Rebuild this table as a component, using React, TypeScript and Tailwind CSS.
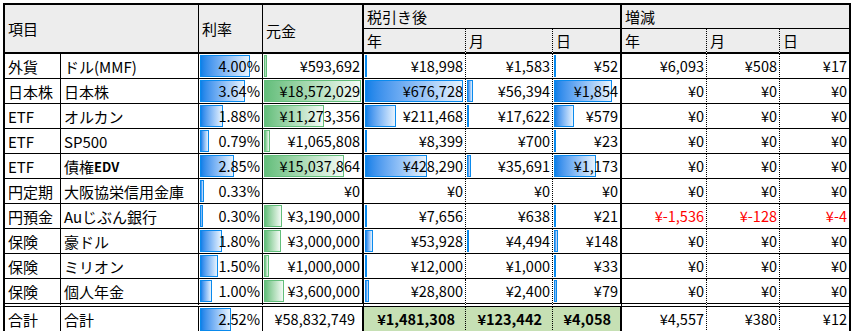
import clsx from "clsx";
import type { ReactNode } from "react";

type Row = {
  cat: string;
  name: ReactNode;
  rate: string;
  rateBar: number;
  principal: string;
  principalBar: number;
  year: string;
  yearBar: number;
  month: string;
  monthBar: number;
  day: string;
  dayBar: number;
  diff: [string, string, string];
  negative?: boolean;
};

const rows: Row[] = [
  { cat: "外貨", name: "ドル(MMF)", rate: "4.00%", rateBar: 50, principal: "¥593,692", principalBar: 3, year: "¥18,998", yearBar: 2, month: "¥1,583", monthBar: 0, day: "¥52", dayBar: 2, diff: ["¥6,093", "¥508", "¥17"] },
  { cat: "日本株", name: "日本株", rate: "3.64%", rateBar: 45, principal: "¥18,572,029", principalBar: 97, year: "¥676,728", yearBar: 98, month: "¥56,394", monthBar: 6, day: "¥1,854", dayBar: 58, diff: ["¥0", "¥0", "¥0"] },
  { cat: "ETF", name: "オルカン", rate: "1.88%", rateBar: 23, principal: "¥11,273,356", principalBar: 60, year: "¥211,468", yearBar: 31, month: "¥17,622", monthBar: 2, day: "¥579", dayBar: 20, diff: ["¥0", "¥0", "¥0"] },
  { cat: "ETF", name: "SP500", rate: "0.79%", rateBar: 9, principal: "¥1,065,808", principalBar: 6, year: "¥8,399", yearBar: 2, month: "¥700", monthBar: 0, day: "¥23", dayBar: 2, diff: ["¥0", "¥0", "¥0"] },
  {
    cat: "ETF",
    name: (
      <>
        債権<span className="text-[13px] font-bold">EDV</span>
      </>
    ),
    rate: "2.85%", rateBar: 34, principal: "¥15,037,864", principalBar: 80, year: "¥428,290", yearBar: 62, month: "¥35,691", monthBar: 4, day: "¥1,173", dayBar: 42, diff: ["¥0", "¥0", "¥0"],
  },
  { cat: "円定期", name: "大阪協栄信用金庫", rate: "0.33%", rateBar: 4, principal: "¥0", principalBar: 0, year: "¥0", yearBar: 0, month: "¥0", monthBar: 0, day: "¥0", dayBar: 0, diff: ["¥0", "¥0", "¥0"] },
  { cat: "円預金", name: "Auじぶん銀行", rate: "0.30%", rateBar: 3, principal: "¥3,190,000", principalBar: 18, year: "¥7,656", yearBar: 2, month: "¥638", monthBar: 0, day: "¥21", dayBar: 2, diff: ["¥-1,536", "¥-128", "¥-4"], negative: true },
  { cat: "保険", name: "豪ドル", rate: "1.80%", rateBar: 22, principal: "¥3,000,000", principalBar: 17, year: "¥53,928", yearBar: 8, month: "¥4,494", monthBar: 2, day: "¥148", dayBar: 4, diff: ["¥0", "¥0", "¥0"] },
  { cat: "保険", name: "ミリオン", rate: "1.50%", rateBar: 18, principal: "¥1,000,000", principalBar: 5, year: "¥12,000", yearBar: 2, month: "¥1,000", monthBar: 0, day: "¥33", dayBar: 2, diff: ["¥0", "¥0", "¥0"] },
  { cat: "保険", name: "個人年金", rate: "1.00%", rateBar: 12, principal: "¥3,600,000", principalBar: 20, year: "¥28,800", yearBar: 4, month: "¥2,400", monthBar: 0, day: "¥79", dayBar: 3, diff: ["¥0", "¥0", "¥0"] },
];

// right border of each column
const colBorder = [
  "border-r",
  "border-r",
  "border-r",
  "border-r-2",
  "border-r [border-right-style:dotted]",
  "border-r [border-right-style:dotted]",
  "border-r-2",
  "border-r [border-right-style:dotted]",
  "border-r [border-right-style:dotted]",
  "",
];

function TextCell({ col, row, children }: { col: number; row: string; children: ReactNode }) {
  return (
    <div className={clsx("flex items-center pl-[3px] text-[15px] border-black whitespace-nowrap overflow-hidden", colBorder[col], row)}>
      {children}
    </div>
  );
}

function NumCell({
  col,
  row,
  value,
  bar = 0,
  green,
  className,
}: {
  col: number;
  row: string;
  value: string;
  bar?: number;
  green?: boolean;
  className?: string;
}) {
  return (
    <div
      className={clsx(
        "relative flex items-center justify-end pr-[2px] text-[14.5px] border-black whitespace-nowrap overflow-hidden",
        colBorder[col],
        row,
        className
      )}
    >
      {bar > 0 && (
        <span
          className={clsx(
            "absolute left-px top-px bottom-px border bg-linear-to-r",
            green
              ? "border-[#63be7b] from-[#63be7b] to-[#f3faf5]"
              : "border-[#0a8aed] from-[#0a80e8] to-[#e6f2fd]"
          )}
          style={{ width: bar }}
        />
      )}
      <span className="relative">{value}</span>
    </div>
  );
}

export default function App() {
  const head = "bg-[#ededed] flex items-center pl-[3px] text-[15px] border-black";
  return (
    <div className="w-[851px] h-[331px] overflow-hidden bg-white pt-[3px] pl-[3px] font-['Noto_Sans_CJK_JP','Noto_Sans',sans-serif] text-black leading-none">
      <div className="grid w-[848px] grid-cols-[56px_138px_64px_101px_102px_87px_69px_85px_73px_69px] grid-rows-[24px_25px_repeat(9,25px)_28px_25px] border-l-2 border-t-2 border-r-2 border-black">
        {/* header */}
        <div className={clsx(head, "col-span-2 row-span-2 border-r border-b-2")}>項目</div>
        <div className={clsx(head, "row-span-2 border-r border-b-2")}>利率</div>
        <div className={clsx(head, "row-span-2 border-r-2 border-b-2 pt-[4px]")}>元金</div>
        <div className={clsx(head, "col-span-3 border-r-2 border-b")}>税引き後</div>
        <div className={clsx(head, "col-span-3 border-b")}>増減</div>
        {["年", "月", "日", "年", "月", "日"].map((t, i) => (
          <div key={i} className={clsx(head, colBorder[i + 4], "border-b-2")}>
            {t}
          </div>
        ))}

        {/* body */}
        {rows.map((r, i) => {
          const rb = i === rows.length - 1 ? "border-b-4 [border-bottom-style:double]" : "border-b";
          return (
            <div key={i} className="contents">
              <TextCell col={0} row={rb}>{r.cat}</TextCell>
              <TextCell col={1} row={rb}>{r.name}</TextCell>
              <NumCell col={2} row={rb} value={r.rate} bar={r.rateBar} />
              <NumCell col={3} row={rb} value={r.principal} bar={r.principalBar} green />
              <NumCell col={4} row={rb} value={r.year} bar={r.yearBar} />
              <NumCell col={5} row={rb} value={r.month} bar={r.monthBar} />
              <NumCell col={6} row={rb} value={r.day} bar={r.dayBar} />
              {r.diff.map((d, j) => (
                <NumCell key={j} col={7 + j} row={rb} value={d} className={r.negative ? "text-[#ff0000]" : ""} />
              ))}
            </div>
          );
        })}

        {/* total */}
        <TextCell col={0} row="">合計</TextCell>
        <TextCell col={1} row="">合計</TextCell>
        <NumCell col={2} row="" value="2.52%" bar={31} />
        <NumCell col={3} row="" value="¥58,832,749" className="pr-[7px]" />
        <NumCell col={4} row="" value="¥1,481,308" className="bg-[#c6e0b4] font-bold pr-[10px]" />
        <NumCell col={5} row="" value="¥123,442" className="bg-[#c6e0b4] font-bold pr-[10px]" />
        <NumCell col={6} row="" value="¥4,058" className="bg-[#c6e0b4] font-bold pr-[9px]" />
        <NumCell col={7} row="" value="¥4,557" />
        <NumCell col={8} row="" value="¥380" />
        <NumCell col={9} row="" value="¥12" />
      </div>
    </div>
  );
}
